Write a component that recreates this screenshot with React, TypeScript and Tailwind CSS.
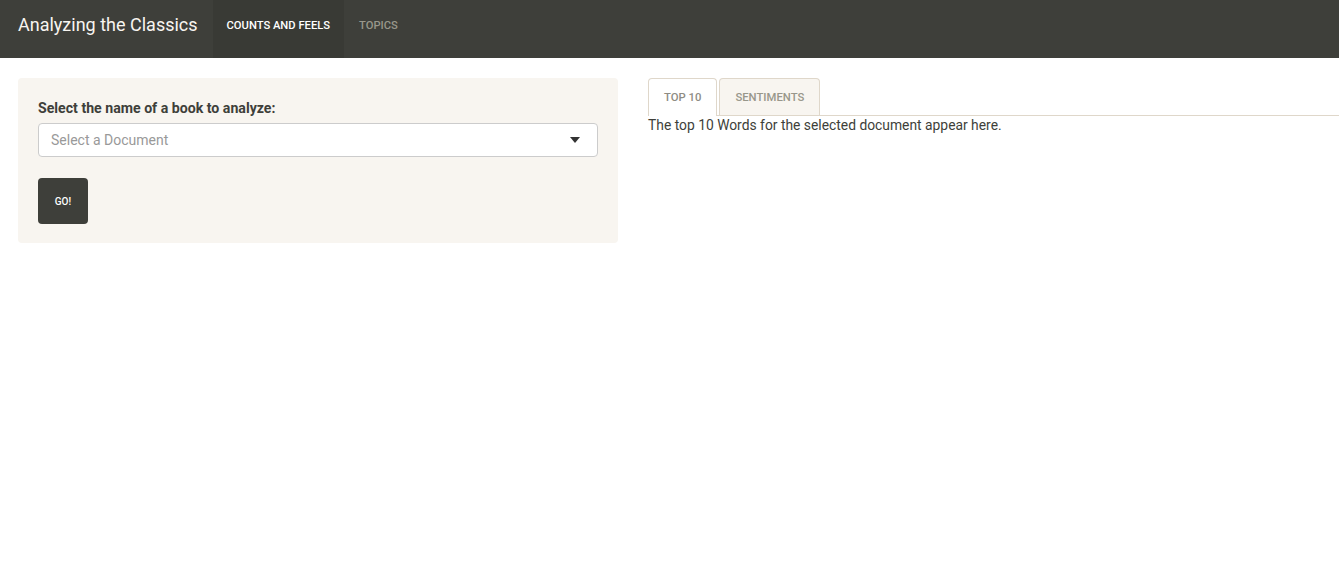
import { useState } from "react";

const tabs = ["Top 10", "Sentiments"];

function Navbar() {
  return (
    <nav className="flex h-[58px] items-stretch bg-[#3e3f3a] pl-[18px]">
      <span className="pt-[14px] pr-[15px] text-[18px] leading-[22px] text-[#f8f5f0]">
        Analyzing the Classics
      </span>
      <a className="bg-[#393a35] px-[14px] pt-4 text-[11.2px] font-medium uppercase leading-5 text-white">
        Counts and Feels
      </a>
      <a className="px-[15px] pt-4 text-[11.2px] font-medium uppercase leading-5 text-[#98978b]">
        Topics
      </a>
    </nav>
  );
}

function Sidebar() {
  return (
    <div className="w-[600px] shrink-0 rounded bg-[#f8f5f0] px-5 pt-5 pb-[19px]">
      <label className="mb-[5px] block text-[14.15px] font-bold leading-5 text-[#3e3f3a]">
        Select the name of a book to analyze:
      </label>
      <div className="flex h-[34px] items-center justify-between rounded border border-[#cccccc] bg-white pl-3 pr-[17px]">
        <span className="text-[14px] text-[#999999]">Select a Document</span>
        <svg width="10" height="6" viewBox="0 0 10 6">
          <path d="M0 0h10L5 6z" fill="#333333" />
        </svg>
      </div>
      <button className="mt-[21px] flex h-[46px] w-[50px] items-center justify-center rounded bg-[#3e3f3a] text-[10px] font-medium uppercase text-white">
        Go!
      </button>
    </div>
  );
}

function Main() {
  const [active, setActive] = useState(0);
  return (
    <div className="min-w-0 flex-1">
      <div className="flex gap-[2px] border-b border-[#dfd7ca]">
        {tabs.map((t, i) => (
          <button
            key={t}
            onClick={() => setActive(i)}
            className={
              i === active
                ? "-mb-px h-[38px] rounded-t border border-b-0 border-[#dfd7ca] bg-white px-[15px] pt-px text-[11.3px] font-medium uppercase text-[#8e8c84]"
                : "h-[37px] rounded-t border border-b-0 border-[#dfd7ca] bg-[#f8f5f0] px-[15px] pt-[2px] text-[11.3px] font-medium uppercase text-[#98978b]"
            }
          >
            {t}
          </button>
        ))}
      </div>
      <p className="text-[13.85px] leading-[18px] text-[#3e3f3a]">
        The top 10 Words for the selected document appear here.
      </p>
    </div>
  );
}

export default function App() {
  return (
    <div className="min-h-[583px] bg-white font-['Roboto',sans-serif]">
      <Navbar />
      <div className="flex gap-[30px] pt-5 pl-[18px]">
        <Sidebar />
        <Main />
      </div>
    </div>
  );
}
